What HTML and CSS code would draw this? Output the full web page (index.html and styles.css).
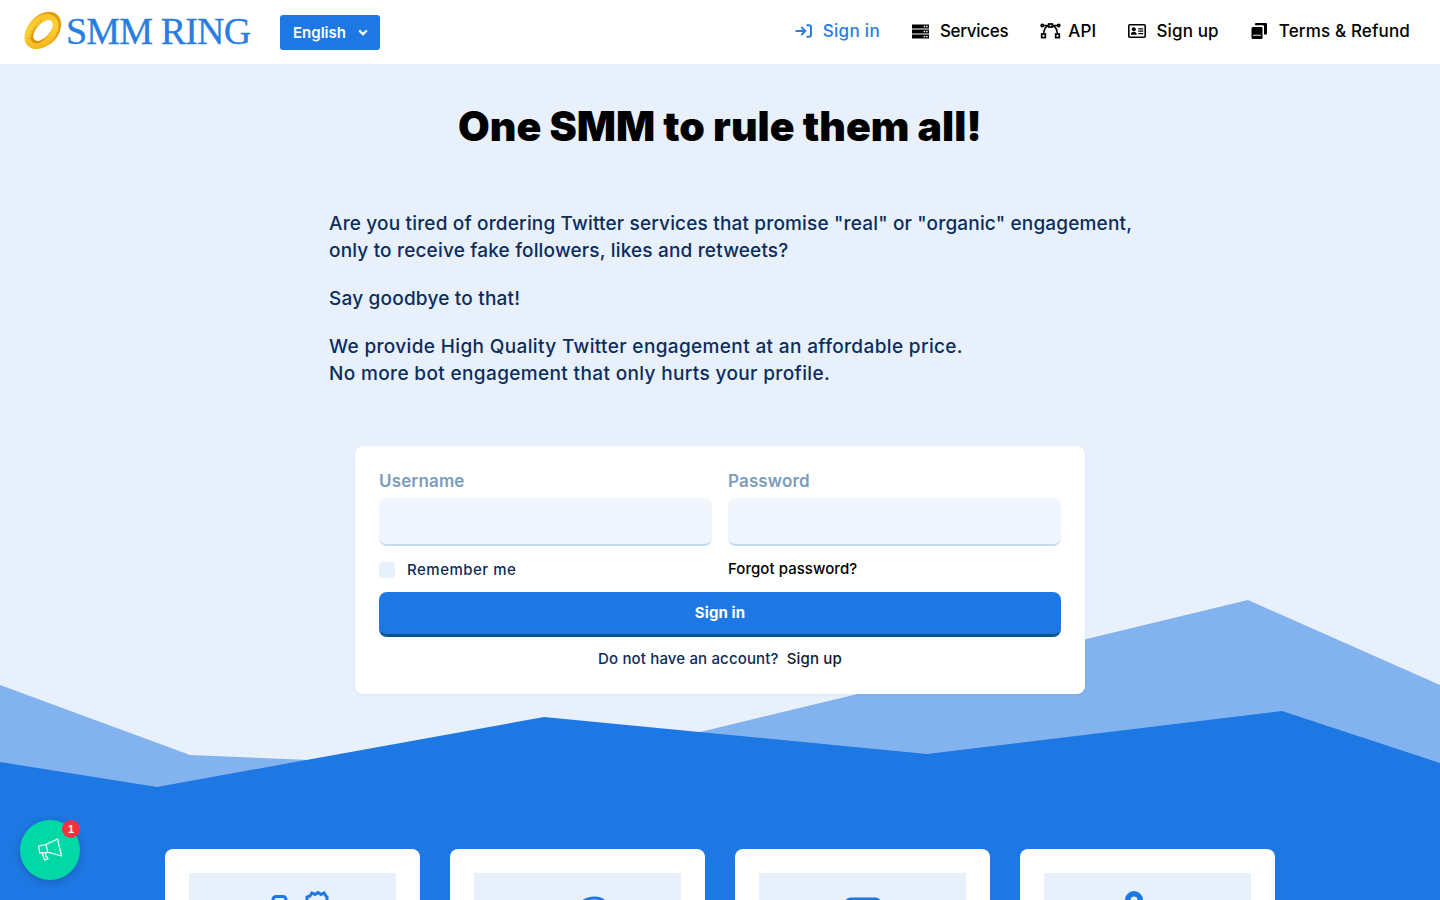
FILE: index.html
```html
<!DOCTYPE html>
<html lang="en">
<head>
    <meta charset="UTF-8">
    <meta name="viewport" content="width=device-width, initial-scale=1.0">
    <title>SMM Ring</title>
    <link rel="stylesheet" href="styles.css">
</head>
<body>
    <svg class="montanas" width="1440" height="900" viewBox="0 0 1440 900" aria-hidden="true">
        <polygon fill="#82b3ef" points="0,685 190,755 310,760 700,732 1248,600 1440,685 1440,900 0,900"></polygon>
        <polygon fill="#1e78e4" points="0,762 157,787 544,717 927,754 1282,711 1440,763 1440,900 0,900"></polygon>
    </svg>

    <header class="cabecera">
        <div class="marca">
            <a class="logo" href="#">
                <svg width="38" height="38" viewBox="0 0 38 38">
                    <defs>
                        <linearGradient id="oro" x1="0" y1="1" x2="1" y2="0">
                            <stop offset="0" stop-color="#f0ad14"></stop>
                            <stop offset="0.55" stop-color="#fcd034"></stop>
                            <stop offset="1" stop-color="#f5bd22"></stop>
                        </linearGradient>
                    </defs>
                    <ellipse cx="19.5" cy="17" rx="20.5" ry="15" transform="rotate(-48 19.5 17)" fill="#e39c10"></ellipse>
                    <ellipse cx="17.5" cy="18.5" rx="20" ry="14.2" transform="rotate(-48 17.5 18.5)" fill="url(#oro)"></ellipse>
                    <ellipse cx="17.5" cy="19" rx="13.6" ry="7.4" transform="rotate(-48 17.5 19)" fill="#d9930f"></ellipse>
                    <ellipse cx="19" cy="17.5" rx="12.6" ry="6.6" transform="rotate(-48 19 17.5)" fill="#ffffff"></ellipse>
                    <path d="M5 26 Q8 14 19 6" fill="none" stroke="#d6920e" stroke-width="1" stroke-dasharray="2 1.5"></path>
                </svg>
                <span class="logo-texto">SMM RING</span>
            </a>
            <button class="boton-idioma">
                English
                <svg width="10" height="7" viewBox="0 0 10 7"><path d="M1.2 1.4 5 5.2 8.8 1.4" fill="none" stroke="currentColor" stroke-width="2.2"></path></svg>
            </button>
        </div>
        <nav class="menu">
            <a class="menu-item activo" href="#">
                <span class="menu-icono"><svg width="17" height="14" viewBox="0 0 17 14" fill="none" stroke="currentColor" stroke-width="2"><path d="M0.5 7H10M6.3 3 10.3 7 6.3 11"></path><path d="M11.5 1.2H14a2 2 0 0 1 2 2v7.6a2 2 0 0 1-2 2H11.5"></path></svg></span>
                Sign in
            </a>
            <a class="menu-item estrecho" href="#">
                <span class="menu-icono"><svg width="17" height="15" viewBox="0 0 16 14"><path fill="currentColor" d="M0 0.3H16V4.1H0ZM0 5.1H16V8.9H0ZM0 9.9H16V13.7H0Z"></path><path fill="#ffffff" d="M11 1.6h1.4v1.3H11ZM13.3 1.6h1.4v1.3h-1.4ZM11 6.4h1.4v1.3H11ZM13.3 6.4h1.4v1.3h-1.4ZM11 11.2h1.4v1.3H11ZM13.3 11.2h1.4v1.3h-1.4Z"></path></svg></span>
                Services
            </a>
            <a class="menu-item" href="#">
                <span class="menu-icono"><svg width="21" height="16" viewBox="0 0 20 16" fill="none" stroke="currentColor" stroke-width="1.7"><path d="M3 11C3.5 6 6 3 8.5 2.5M17 11C16.5 6 14 3 11.5 2.5M2.5 2.5H8M12 2.5H17.5"></path><rect x="8.2" y="1" width="3.6" height="3"></rect><circle cx="1.8" cy="2.5" r="1.1"></circle><circle cx="18.2" cy="2.5" r="1.1"></circle><rect x="1.2" y="11" width="3.6" height="3.6"></rect><rect x="15.2" y="11" width="3.6" height="3.6"></rect></svg></span>
                API
            </a>
            <a class="menu-item" href="#">
                <span class="menu-icono"><svg width="18" height="14" viewBox="0 0 18 14"><rect x="0.8" y="0.8" width="16.4" height="12.4" rx="1" fill="none" stroke="currentColor" stroke-width="1.6"></rect><circle cx="5.8" cy="5.2" r="2" fill="currentColor"></circle><path fill="currentColor" d="M2.8 10.8c0-2 1.3-3 3-3s3 1 3 3ZM10.2 4.2h5V5.4h-5ZM10.2 6.6h5V7.8h-5ZM10.2 9h5v1.2h-5Z"></path></svg></span>
                Sign up
            </a>
            <a class="menu-item" href="#">
                <span class="menu-icono"><svg width="16" height="16" viewBox="0 0 16 16"><path fill="currentColor" d="M0.5 5.5a1.5 1.5 0 0 1 1.5-1.5h8.5a1 1 0 0 1 1 1V15a1 1 0 0 1-1 1H2A1.5 1.5 0 0 1 0.5 14.5Z"></path><path fill="#ffffff" d="M2 11.8h8v.9H2Z"></path><path fill="currentColor" d="M4 1a1 1 0 0 1 1-1h10a1 1 0 0 1 1 1v9.5a1 1 0 0 1-1 1h-2V3.2a1 1 0 0 0-1-1H4Z"></path></svg></span>
                Terms &amp; Refund
            </a>
        </nav>
    </header>

    <main class="contenido">
        <h1 class="titulo">One SMM to rule them all!</h1>
        <div class="intro">
            <p>Are you tired of ordering Twitter services that promise "real" or "organic" engagement,<br>only to receive fake followers, likes and retweets?</p>
            <p>Say goodbye to that!</p>
            <p>We provide High Quality Twitter engagement at an affordable price.<br>No more bot engagement that only hurts your profile.</p>
        </div>

        <form class="tarjeta-login">
            <div class="fila-campos">
                <div class="campo">
                    <label for="usuario">Username</label>
                    <input id="usuario" type="text">
                </div>
                <div class="campo">
                    <label for="clave">Password</label>
                    <input id="clave" type="password">
                </div>
            </div>
            <div class="fila-opciones">
                <label class="recordar"><span class="casilla"></span>Remember me</label>
                <a class="olvido" href="#">Forgot password?</a>
            </div>
            <button class="boton-entrar" type="button">Sign in</button>
            <div class="registro">Do not have an account? <a href="#">Sign up</a></div>
        </form>

        <section class="servicios">
            <div class="servicio"><div class="servicio-caja">
                <svg class="icono-derecha" width="58" height="12" viewBox="0 0 58 12" fill="none" stroke="#1e78e4" stroke-width="3"><path d="M2 12V8.5A3 3 0 0 1 5 5.5H12A3 3 0 0 1 15 8.5V12"></path><path d="M36 12V6L39 5 41 2 44 3.5 47 1.5 50 3.5 53 2 55 5 56 6V12"></path></svg>
            </div></div>
            <div class="servicio"><div class="servicio-caja">
                <svg class="icono-medio" width="60" height="12" viewBox="0 0 60 12" fill="none" stroke="#1e78e4" stroke-width="3"><path d="M2 10 4 8"></path><path d="M32 12C34 5 40 3 47 3 52 3 56 5 58 9"></path></svg>
            </div></div>
            <div class="servicio"><div class="servicio-caja">
                <svg class="icono-bajo" width="36" height="12" viewBox="0 0 36 12" fill="none" stroke="#1e78e4" stroke-width="3"><path d="M1.5 12V6A4 4 0 0 1 5.5 2H30.5A4 4 0 0 1 34.5 6V12"></path></svg>
            </div></div>
            <div class="servicio"><div class="servicio-caja">
                <svg class="icono-izquierda" width="20" height="12" viewBox="0 0 20 12"><path fill="#1e78e4" fill-rule="evenodd" d="M10 0a9 9 0 0 1 9 9v3H1V9a9 9 0 0 1 9-9Zm0 5.5a3.5 3.5 0 0 0-3.5 3.5v3h7V9A3.5 3.5 0 0 0 10 5.5Z"></path></svg>
            </div></div>
        </section>
    </main>

    <button class="boton-avisos" aria-label="Avisos">
        <svg width="26" height="24" viewBox="0 0 26 24" fill="none" stroke="#ffffff" stroke-width="1.2" stroke-linejoin="round"><path d="M1.5 8.2 9 6.5 20.5 1 24.5 18 12.5 14.5 2.8 14.8Z"></path><path d="M9 6.5 10.8 14.6"></path><path d="M5.2 14.8 7.5 21.8 11 21 10.2 19 9 18.8 8.4 14.7"></path></svg>
        <span class="insignia">1</span>
    </button>
</body>
</html>
```

FILE: styles.css
```css
* {
    box-sizing: border-box;
}
body {
    margin: 0;
    height: 900px;
    overflow: hidden;
    position: relative;
    background-color: #e8f0fc;
    font-family: Inter, 'Noto Sans', Arial, sans-serif;
    color: #0b2d5c;
}
a {
    color: inherit;
    text-decoration: none;
}
.montanas {
    position: absolute;
    top: 0;
    left: 0;
}
.cabecera {
    position: relative;
    height: 64px;
    background-color: #fff;
    display: flex;
    align-items: center;
    justify-content: space-between;
    padding: 0 30px 0 24px;
}
.marca {
    display: flex;
    align-items: center;
}
.logo {
    display: flex;
    align-items: center;
    width: 256px;
    color: #2a7de1;
}
.logo svg {
    flex: none;
    overflow: visible;
}
.logo-texto {
    margin: -2px 0 0 4px;
    font-family: 'Liberation Serif', serif;
    font-size: 38px;
    letter-spacing: -0.85px;
    white-space: nowrap;
    -webkit-text-stroke: 0.3px #2a7de1;
}
.boton-idioma {
    display: flex;
    align-items: center;
    justify-content: space-between;
    width: 100px;
    height: 35px;
    padding: 0 12px 0 13px;
    border: none;
    border-radius: 3px;
    background-color: #1e78e4;
    color: #fff;
    font-family: inherit;
    font-size: 15px;
    font-weight: 600;
}
.menu {
    display: flex;
    align-items: center;
    gap: 32px;
    height: 64px;
    padding-bottom: 2px;
}
.menu-item {
    display: flex;
    align-items: center;
    gap: 8px;
    color: #000;
    font-size: 17px;
    font-weight: 500;
    letter-spacing: 0.15px;
    white-space: nowrap;
}
.menu-item.estrecho {
    letter-spacing: -0.3px;
}
.menu-icono {
    display: flex;
    align-items: center;
    width: 20px;
}
.menu-icono svg {
    flex: none;
}
.menu-item.activo {
    color: #2a7de1;
    letter-spacing: 0.3px;
}
.contenido {
    position: relative;
    height: 836px;
    overflow: hidden;
}
.titulo {
    margin: 38px 0 60px;
    text-align: center;
    color: #000;
    font-size: 41px;
    line-height: 48px;
    font-weight: 900;
}
.intro {
    padding: 0 329px;
    font-size: 19px;
    font-weight: 500;
    line-height: 27px;
    letter-spacing: 0.2px;
    white-space: nowrap;
}
.intro p {
    margin: 0 0 21px;
}
.intro p:first-child {
    letter-spacing: 0.17px;
}
.intro p:last-child {
    margin-bottom: 0;
    letter-spacing: 0.36px;
}
.tarjeta-login {
    width: 730px;
    margin: 59px auto 0;
    padding: 24px 24px 25px;
    background-color: #fff;
    border-radius: 8px;
    box-shadow: 0 1px 3px rgba(30, 80, 160, 0.08);
}
.fila-campos {
    display: grid;
    grid-template-columns: 1fr 1fr;
    gap: 16px;
}
.campo label {
    display: block;
    height: 22px;
    margin-bottom: 6px;
    color: #7b9dbd;
    font-size: 17px;
    font-weight: 600;
    line-height: 22px;
    letter-spacing: 0.15px;
}
.campo input {
    display: block;
    width: 100%;
    height: 48px;
    border: none;
    border-bottom: 2px solid #c6dbef;
    border-radius: 8px;
    background-color: #f1f6fe;
    outline: none;
}
.fila-opciones {
    display: grid;
    grid-template-columns: 1fr 1fr;
    gap: 16px;
    margin-top: 14px;
    height: 18px;
    align-items: center;
    font-size: 15px;
    font-weight: 500;
}
.recordar {
    display: flex;
    align-items: center;
    gap: 12px;
    letter-spacing: 0.5px;
}
.casilla {
    width: 16px;
    height: 16px;
    margin-top: 1px;
    border-radius: 3px;
    background-color: #e8f0fc;
}
.olvido {
    margin-top: -2px;
    color: #000;
    letter-spacing: 0.05px;
}
.boton-entrar {
    display: block;
    width: 100%;
    height: 45px;
    margin-top: 14px;
    padding-bottom: 3px;
    border: none;
    border-bottom: 3px solid #04558f;
    border-radius: 8px;
    background-color: #1e78e4;
    color: #fff;
    font-family: inherit;
    font-size: 15px;
    font-weight: 700;
    letter-spacing: 0.1px;
}
.registro {
    margin-top: 12px;
    height: 20px;
    line-height: 20px;
    text-align: center;
    font-size: 15px;
    font-weight: 500;
    letter-spacing: 0.15px;
}
.registro a {
    margin-left: 4px;
    color: #0b1a30;
}
.servicios {
    display: grid;
    grid-template-columns: repeat(4, 255px);
    gap: 30px;
    justify-content: center;
    margin-top: 155px;
}
.servicio {
    height: 240px;
    padding: 24px;
    background-color: #fff;
    border-radius: 8px;
}
.servicio-caja {
    display: flex;
    justify-content: center;
    height: 100%;
    padding-top: 18px;
    background-color: #e8f0fc;
}
.servicio-caja svg {
    flex: none;
}
.servicio-caja .icono-derecha {
    margin-left: 14px;
}
.servicio-caja .icono-izquierda {
    margin-right: 28px;
}
.servicio-caja .icono-medio {
    margin-top: 4px;
}
.servicio-caja .icono-bajo {
    margin-top: 6px;
}
.boton-avisos {
    position: fixed;
    left: 20px;
    bottom: 20px;
    width: 60px;
    height: 60px;
    padding: 0;
    display: flex;
    align-items: center;
    justify-content: center;
    border: none;
    border-radius: 50%;
    background-color: #00d9a6;
    box-shadow: 0 2px 10px rgba(0, 0, 0, 0.2);
}
.insignia {
    position: absolute;
    top: 0;
    right: 0;
    width: 18px;
    height: 18px;
    border-radius: 50%;
    background-color: #f7323f;
    color: #fff;
    font-family: 'Liberation Sans', Arial, sans-serif;
    font-size: 11px;
    font-weight: 700;
    line-height: 18px;
    text-align: center;
}
```
